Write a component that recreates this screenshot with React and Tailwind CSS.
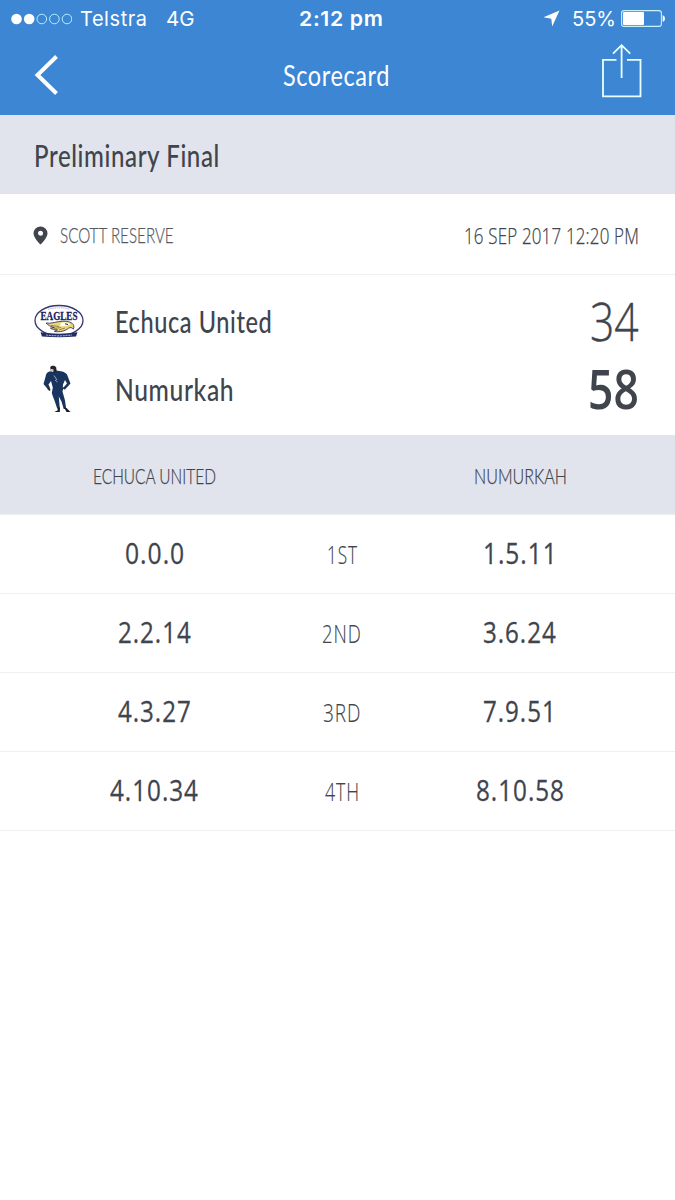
import React, { useLayoutEffect, useRef, useState } from 'react';

// Text squeezed horizontally to a given width, baseline untouched
const Condensed = ({ width, className = '', children }) => {
  const ref = useRef(null);
  const [scale, setScale] = useState(1);

  useLayoutEffect(() => {
    setScale(width / ref.current.offsetWidth);
  }, [width, children]);

  return (
    <span className={`block shrink-0 whitespace-nowrap ${className}`} style={{ width }}>
      <span ref={ref} className="inline-block origin-left" style={{ transform: `scaleX(${scale})` }}>
        {children}
      </span>
    </span>
  );
};

const quarters = [
  { label: '1ST', labelWidth: 31, home: '0.0.0', homeWidth: 60, away: '1.5.11', awayWidth: 75 },
  { label: '2ND', labelWidth: 40, home: '2.2.14', homeWidth: 74, away: '3.6.24', awayWidth: 74 },
  { label: '3RD', labelWidth: 38, home: '4.3.27', homeWidth: 74, away: '7.9.51', awayWidth: 74 },
  { label: '4TH', labelWidth: 35, home: '4.10.34', homeWidth: 89, away: '8.10.58', awayWidth: 89 },
];

const EaglesLogo = () => (
  <svg className="overflow-visible" width="50" height="34" viewBox="0 0 50 34">
    <ellipse cx="25" cy="16.5" rx="24" ry="15" fill="#fff" stroke="#35376f" strokeWidth="1.3" />
    <path d="M14 5.3Q25 2.2 36 5.3" fill="none" stroke="#b4b5ca" strokeWidth="1" strokeDasharray="1.5 .7" />
    <path d="M12 19c5 .8 8-.8 13-1.4 5-.7 10-.6 13 1.6 2 1.4 2.200 3.500 1.400 6-1.400-2-3-1.800-5-1-3 3-9 4.200-14 3.200l3-1.500c-3 .2-5-.5-7-1.800l4-.5c-3.500-.8-6.500-2.500-8.400-4.600z" fill="#ecd47c" stroke="#222750" strokeWidth=".8" />
    <path d="M17 21.500l8 1M20 24.500l7-1M25 26l6-2" stroke="#7b7045" strokeWidth=".8" />
    <path d="M27 18.800c4-1.200 8-.5 9 1.600l-4 1.500-6 .4z" fill="#fff" />
    <path d="M31 19.800l3 .7" stroke="#222" strokeWidth="1" />
    <path d="M6.500 28.300Q25 31 43.500 28.300L42 32.500Q25 34 8 32.500z" fill="#202b68" />
    <path d="M12 31Q25 32.600 38 31" fill="none" stroke="#a6aac6" strokeWidth="1.200" strokeDasharray="2 .8" />
    <text x="25" y="16" textAnchor="middle" textLength="37" lengthAdjust="spacingAndGlyphs" fontFamily="Liberation Serif, serif" fontWeight="700" fontSize="13" fill="#17205c" stroke="#17205c" strokeWidth=".3">EAGLES</text>
  </svg>
);

const NumurkahLogo = () => (
  <svg className="mr-[5px]" width="28" height="48" viewBox="0 0 28 48">
    <path d="M7.500 6.500C4 6.500 3 9 2.500 12L.500 19l5 6 1.700-1.500L5.500 19.500 8 16l1.800 6.500-1 5.500c1 3.500 2.200 6 3.200 9l2.200 6.500h2.600l-.6-7-.4-5 2.700 5 2.200 7.500h2.500l-1.200-8.500-2.500-9 .5-7L22 15l2 3.500-4 4.500 1.800 1.800L27.500 18.500 24 9.500C22 6.500 17 6 13.500 5.500z" fill="#19345f" />
    <path d="M7.200 2C8.500.300 12.300.300 13.200 2.500L13.600 6 11 8 8 7z" fill="#202330" />
    <path d="M7.600 4l3 .3-.3 3-2.200-.8z" fill="#e3c6b4" />
    <path d="M11 10.500l3 4.500M12 15l2.500 2" stroke="#91a6c3" strokeWidth="1" />
    <path d="M5 23l2 2.500M20.500 22.500l-2 2.500" stroke="#302e36" strokeWidth="2" />
    <path d="M14.500 42.500l.3 2.800-3.500 1.700h5.500l.2-4.500zM21 42.500l1.500 2.500 1 2h4L23.500 43z" fill="#191b22" />
  </svg>
);

const StatusBar = () => (
  <div className="flex h-[37px] items-center pl-[11px] pr-[9px] font-['Inter',sans-serif] text-[20.5px] leading-6">
    <div className="flex w-[288px] items-center">
      <svg width="61" height="12" viewBox="0 0 61 12" fill="none" stroke="#b4eeff" strokeWidth="1">
        <circle cx="5.5" cy="6" r="5.3" fill="#fff" stroke="none" />
        <circle cx="18.2" cy="6" r="5.3" fill="#fff" stroke="none" />
        <circle cx="30.8" cy="6" r="4.8" />
        <circle cx="43.4" cy="6" r="4.8" />
        <circle cx="56" cy="6" r="4.8" />
      </svg>
      <Condensed width={68} className="ml-[8px] tracking-[0.03em]">Telstra</Condensed>
      <Condensed width={29} className="ml-[18px]">4G</Condensed>
    </div>
    <Condensed width={84} className="font-semibold tracking-[0.03em]">2:12 pm</Condensed>
    <div className="ml-auto flex items-center">
      <svg width="17" height="17" viewBox="0 0 17 17" fill="#fff">
        <path d="M16.500.500L.500 7.200l7.800 1.500.900 7.800z" />
      </svg>
      <Condensed width={44} className="ml-[12px] mr-[5px]">55%</Condensed>
      <svg width="45" height="17" viewBox="0 0 45 17" fill="none">
        <rect x=".6" y=".6" width="39.8" height="15.8" rx="2.5" stroke="#c9f2ff" strokeWidth="1.1" />
        <rect x="2" y="2" width="21" height="13" rx="1" fill="#fff" />
        <path d="M41.700 5.200c3 .4 3 6.200 0 6.600z" fill="#fff" />
      </svg>
    </div>
  </div>
);

const Header = () => (
  <header className="h-[115px] bg-[#3c86d3] text-white">
    <StatusBar />
    <div className="flex h-[76px] items-center pl-[34px] pr-[33px]">
      <svg width="24" height="40" viewBox="0 0 24 40" fill="none" stroke="#fff" strokeWidth="4">
        <path d="M22.500 1.500L3.500 20l19 18.500" />
      </svg>
      <Condensed width={107} className="ml-[225px] font-['Lato',sans-serif] text-[29px] leading-9 tracking-[0.025em]">Scorecard</Condensed>
      <svg className="mb-[8px] ml-auto" width="41" height="54" viewBox="0 0 41 54" fill="none" stroke="#eaffff" strokeWidth="1.8">
        <path d="M15.500 15.800H2v36.500h37.500V15.800H26M20.600 34V1.500M12 9.700l8.600-8.500 8.600 8.500" />
      </svg>
    </div>
  </header>
);

const TeamRow = ({ logo, name, nameWidth, score, scoreWidth, scoreClass }) => (
  <div className="flex h-[68px] items-center">
    <div className="flex w-[50px] justify-center">{logo}</div>
    <Condensed width={nameWidth} className="ml-[31px] font-['Lato',sans-serif] text-[30px] font-medium tracking-[0.025em]">{name}</Condensed>
    <Condensed width={scoreWidth} className={`ml-auto pb-[3px] font-['Open_Sans',sans-serif] text-[54px] leading-[68px] ${scoreClass}`}>{score}</Condensed>
  </div>
);

const App = () => {
  return (
    <div className="min-h-[1200px] w-[675px] bg-white text-[#40444d]">
      <Header />

      <div className="flex h-[79px] items-center bg-[#e1e4ec] pl-[34px] pt-[2px]">
        <Condensed width={186} className="font-['Lato',sans-serif] text-[30px] font-medium tracking-[0.025em]">Preliminary Final</Condensed>
      </div>

      {/* Venue and date */}
      <div className="flex h-[81px] items-center border-b border-[#efeff1] pl-[33px] pr-[36px] font-light [-webkit-text-stroke:0.25px]">
        <svg className="mt-[2px]" width="15" height="19" viewBox="0 0 15 19">
          <path fillRule="evenodd" d="M7.500.500a7 7 0 0 0-7 7C.500 12 7.500 18.500 7.500 18.500s7-6.500 7-11a7 7 0 0 0-7-7zm0 4.200a2.500 2.500 0 1 1 0 5 2.500 2.500 0 0 1 0-5z" fill="#40444d" />
        </svg>
        <Condensed width={114} className="ml-[12px] font-['Lato',sans-serif] text-[22px] text-[#55585f]">SCOTT RESERVE</Condensed>
        <Condensed width={175} className="ml-auto pt-[2px] font-['Open_Sans',sans-serif] text-[22px] tracking-[0.01em]">16 SEP 2017 12:20 PM</Condensed>
      </div>

      {/* Teams */}
      <div className="h-[160px] pl-[34px] pr-[36px] pt-[12px]">
        <TeamRow logo={<EaglesLogo />} name="Echuca United" nameWidth={157} score="34" scoreWidth={49} scoreClass="font-light [-webkit-text-stroke:0.4px]" />
        <TeamRow logo={<NumurkahLogo />} name="Numurkah" nameWidth={119} score="58" scoreWidth={51} scoreClass="font-semibold" />
      </div>

      {/* Quarter by quarter */}
      <div className="grid h-[80px] grid-cols-[309px_66px_290px] items-center justify-items-center border-b border-[#eeeff1] bg-[#e1e4ec] pt-px font-['Lato',sans-serif] text-[22px] font-light [-webkit-text-stroke:0.25px]">
        <Condensed width={123}>ECHUCA UNITED</Condensed>
        <span />
        <Condensed width={93}>NUMURKAH</Condensed>
      </div>
      {quarters.map((quarter) => (
        <div
          key={quarter.label}
          className="grid h-[79px] grid-cols-[309px_66px_290px] items-center justify-items-center border-b border-[#eeeff1] pb-[3px] font-['Open_Sans',sans-serif] text-[30px] font-medium tracking-[0.04em] [-webkit-text-stroke:0.3px]"
        >
          <Condensed width={quarter.homeWidth}>{quarter.home}</Condensed>
          <Condensed width={quarter.labelWidth} className="pt-[5px] text-[25px] font-light [-webkit-text-stroke:0.15px]">{quarter.label}</Condensed>
          <Condensed width={quarter.awayWidth}>{quarter.away}</Condensed>
        </div>
      ))}
    </div>
  );
};

export default App;
